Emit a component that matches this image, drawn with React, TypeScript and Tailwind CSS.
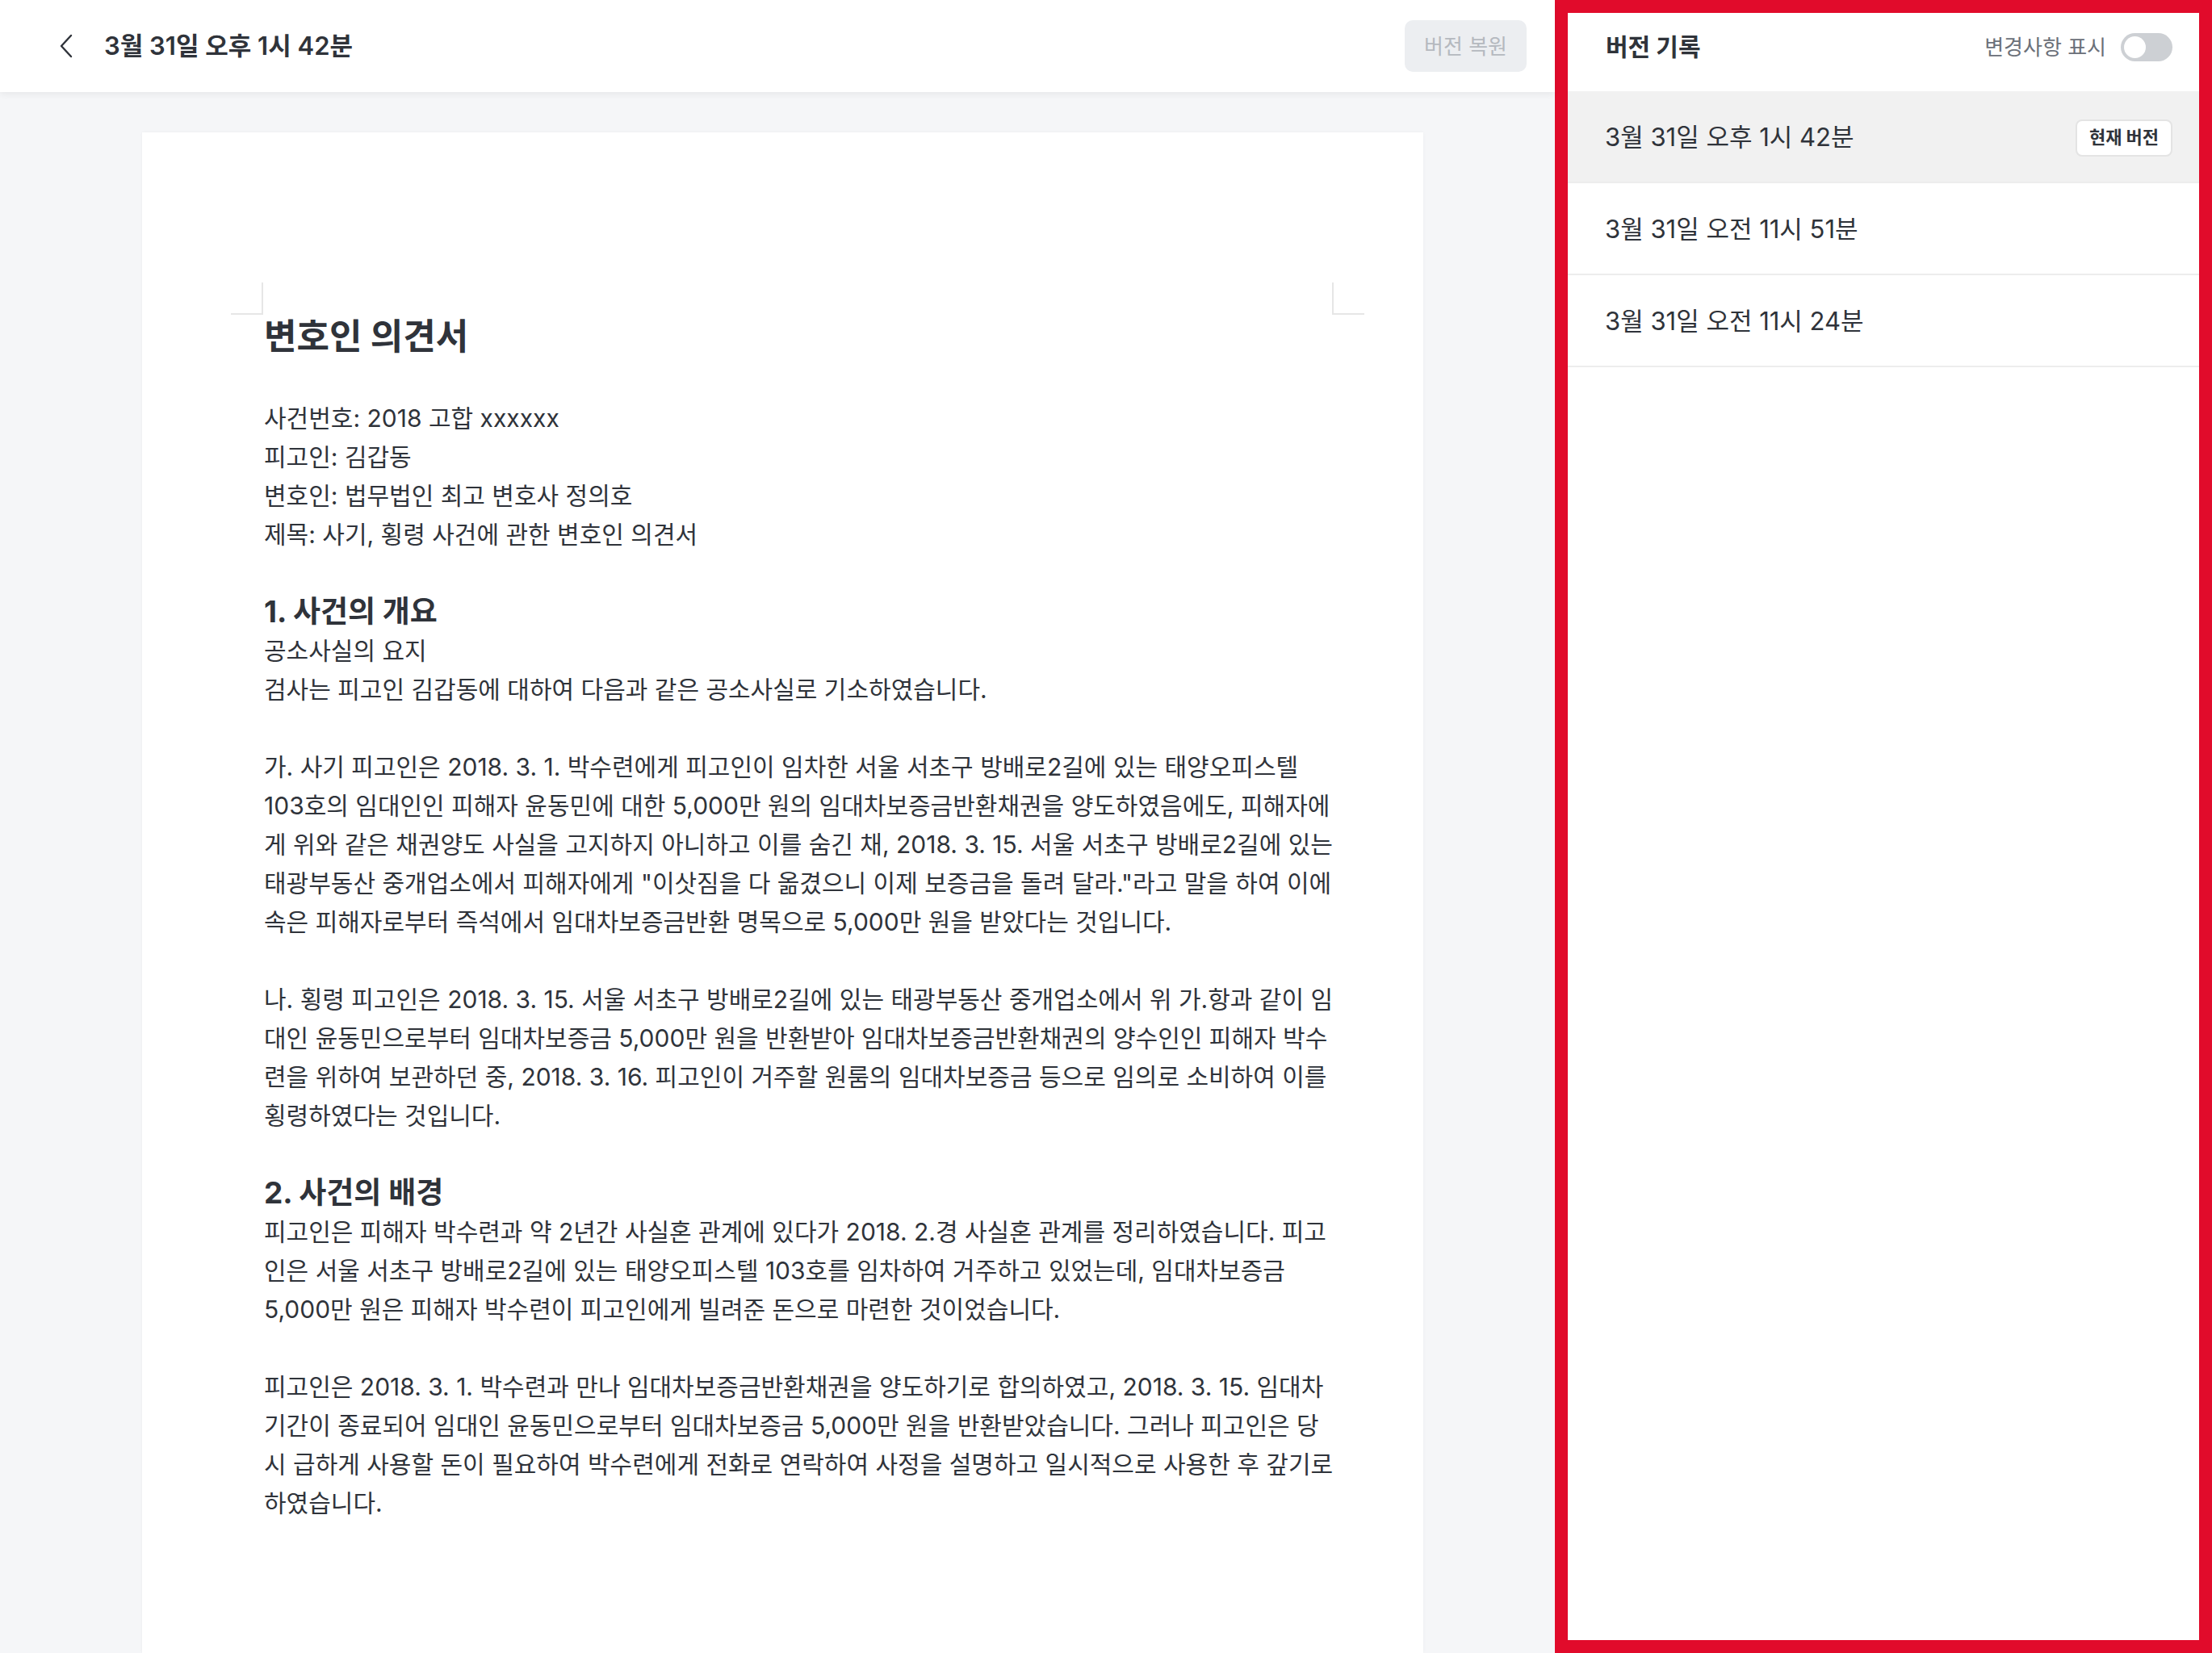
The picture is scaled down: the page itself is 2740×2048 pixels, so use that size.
import React from "react";

const font = "font-['Inter','Noto_Sans_CJK_KR',sans-serif]";

type Block = { kind: "h" | "p" | "gap"; lines?: string[] };

const doc: Block[] = [
  { kind: "p", lines: ["사건번호: 2018 고합 xxxxxx", "피고인: 김갑동", "변호인: 법무법인 최고 변호사 정의호", "제목: 사기, 횡령 사건에 관한 변호인 의견서"] },
  { kind: "gap" },
  { kind: "h", lines: ["1. 사건의 개요"] },
  { kind: "p", lines: ["공소사실의 요지", "검사는 피고인 김갑동에 대하여 다음과 같은 공소사실로 기소하였습니다."] },
  { kind: "gap" },
  {
    kind: "p",
    lines: [
      "가. 사기 피고인은 2018. 3. 1. 박수련에게 피고인이 임차한 서울 서초구 방배로2길에 있는 태양오피스텔",
      "103호의 임대인인 피해자 윤동민에 대한 5,000만 원의 임대차보증금반환채권을 양도하였음에도, 피해자에",
      "게 위와 같은 채권양도 사실을 고지하지 아니하고 이를 숨긴 채, 2018. 3. 15. 서울 서초구 방배로2길에 있는",
      "태광부동산 중개업소에서 피해자에게 \"이삿짐을 다 옮겼으니 이제 보증금을 돌려 달라.\"라고 말을 하여 이에",
      "속은 피해자로부터 즉석에서 임대차보증금반환 명목으로 5,000만 원을 받았다는 것입니다.",
    ],
  },
  { kind: "gap" },
  {
    kind: "p",
    lines: [
      "나. 횡령 피고인은 2018. 3. 15. 서울 서초구 방배로2길에 있는 태광부동산 중개업소에서 위 가.항과 같이 임",
      "대인 윤동민으로부터 임대차보증금 5,000만 원을 반환받아 임대차보증금반환채권의 양수인인 피해자 박수",
      "련을 위하여 보관하던 중, 2018. 3. 16. 피고인이 거주할 원룸의 임대차보증금 등으로 임의로 소비하여 이를",
      "횡령하였다는 것입니다.",
    ],
  },
  { kind: "gap" },
  { kind: "h", lines: ["2. 사건의 배경"] },
  {
    kind: "p",
    lines: [
      "피고인은 피해자 박수련과 약 2년간 사실혼 관계에 있다가 2018. 2.경 사실혼 관계를 정리하였습니다. 피고",
      "인은 서울 서초구 방배로2길에 있는 태양오피스텔 103호를 임차하여 거주하고 있었는데, 임대차보증금",
      "5,000만 원은 피해자 박수련이 피고인에게 빌려준 돈으로 마련한 것이었습니다.",
    ],
  },
  { kind: "gap" },
  {
    kind: "p",
    lines: [
      "피고인은 2018. 3. 1. 박수련과 만나 임대차보증금반환채권을 양도하기로 합의하였고, 2018. 3. 15. 임대차",
      "기간이 종료되어 임대인 윤동민으로부터 임대차보증금 5,000만 원을 반환받았습니다. 그러나 피고인은 당",
      "시 급하게 사용할 돈이 필요하여 박수련에게 전화로 연락하여 사정을 설명하고 일시적으로 사용한 후 갚기로",
      "하였습니다.",
    ],
  },
];

const versions = ["3월 31일 오후 1시 42분", "3월 31일 오전 11시 51분", "3월 31일 오전 11시 24분"];

function ChevronLeft() {
  return (
    <svg width="20" height="30" viewBox="0 0 20 30" fill="none">
      <path d="M16 2 L4 15 L16 28" stroke="#2f333a" strokeWidth="2.4" strokeLinecap="round" strokeLinejoin="round" />
    </svg>
  );
}

export default function App() {
  return (
    <div className={`flex h-[2048px] w-[2740px] overflow-hidden bg-[#f5f6f8] text-[#2f333a] ${font}`}>
      <main className="flex w-[1926px] flex-col">
        <header className="relative z-10 flex h-[114px] shrink-0 items-center bg-white pl-[72px] pr-[35px] shadow-[0_3px_8px_rgba(0,0,0,0.06)]">
          <ChevronLeft />
          <h1 className="ml-[37px] text-[31px] font-semibold">3월 31일 오후 1시 42분</h1>
          <button className="ml-auto flex h-[64px] w-[151px] items-center justify-center rounded-[10px] bg-[#eceef1] text-[26px] text-[#b5b9bf]">
            버전 복원
          </button>
        </header>

        <div className="flex-1 overflow-hidden pl-[176px] pt-[50px]">
          <article className="relative h-full w-[1587px] bg-white pl-[151px] pr-[112px] pt-[225px] shadow-[0_0_4px_rgba(0,0,0,0.04)]">
            <span className="absolute left-[110px] top-[186px] h-[40px] w-[40px] border-b-2 border-r-2 border-[#e6e6e6]" />
            <span className="absolute left-[1474px] top-[186px] h-[40px] w-[40px] border-b-2 border-l-2 border-[#e6e6e6]" />

            <h2 className="mb-[49px] text-[44px] font-bold leading-[56px]">변호인 의견서</h2>

            <div className="text-[30px] leading-[48px]">
              {doc.map((b, i) => {
                if (b.kind === "gap") return <div key={i} className="h-[48px]" />;
                if (b.kind === "h")
                  return (
                    <h3 key={i} className="text-[37px] font-bold leading-[48px]">
                      {b.lines![0]}
                    </h3>
                  );
                return (
                  <p key={i}>
                    {b.lines!.map((l, j) => (
                      <span key={j} className="block whitespace-nowrap">
                        {l}
                      </span>
                    ))}
                  </p>
                );
              })}
            </div>
          </article>
        </div>
      </main>

      <aside className="flex w-[814px] flex-col border-[16px] border-[#e10b2b] bg-white">
        <div className="flex h-[97px] shrink-0 items-center pb-[13px] pl-[47px] pr-[33px]">
          <h2 className="text-[30px] font-bold">버전 기록</h2>
          <span className="ml-auto text-[26px] text-[#6b7079]">변경사항 표시</span>
          <span className="ml-[18px] flex h-[35px] w-[64px] items-center rounded-full bg-[#cdd0d4] px-[4px]">
            <span className="h-[27px] w-[27px] rounded-full bg-white" />
          </span>
        </div>
        {versions.map((v, i) => (
          <div
            key={v}
            className={`flex h-[114px] shrink-0 items-center border-b-2 border-[#ededed] pl-[46px] pr-[33px] pt-[3px] ${i === 0 ? "bg-[#f1f1f1]" : ""}`}
          >
            <span className="text-[31px]">{v}</span>
            {i === 0 && (
              <span className="ml-auto flex h-[46px] w-[120px] items-center justify-center rounded-[8px] border-2 border-[#e4e4e4] bg-white text-[22px] font-bold">
                현재 버전
              </span>
            )}
          </div>
        ))}
      </aside>
    </div>
  );
}
